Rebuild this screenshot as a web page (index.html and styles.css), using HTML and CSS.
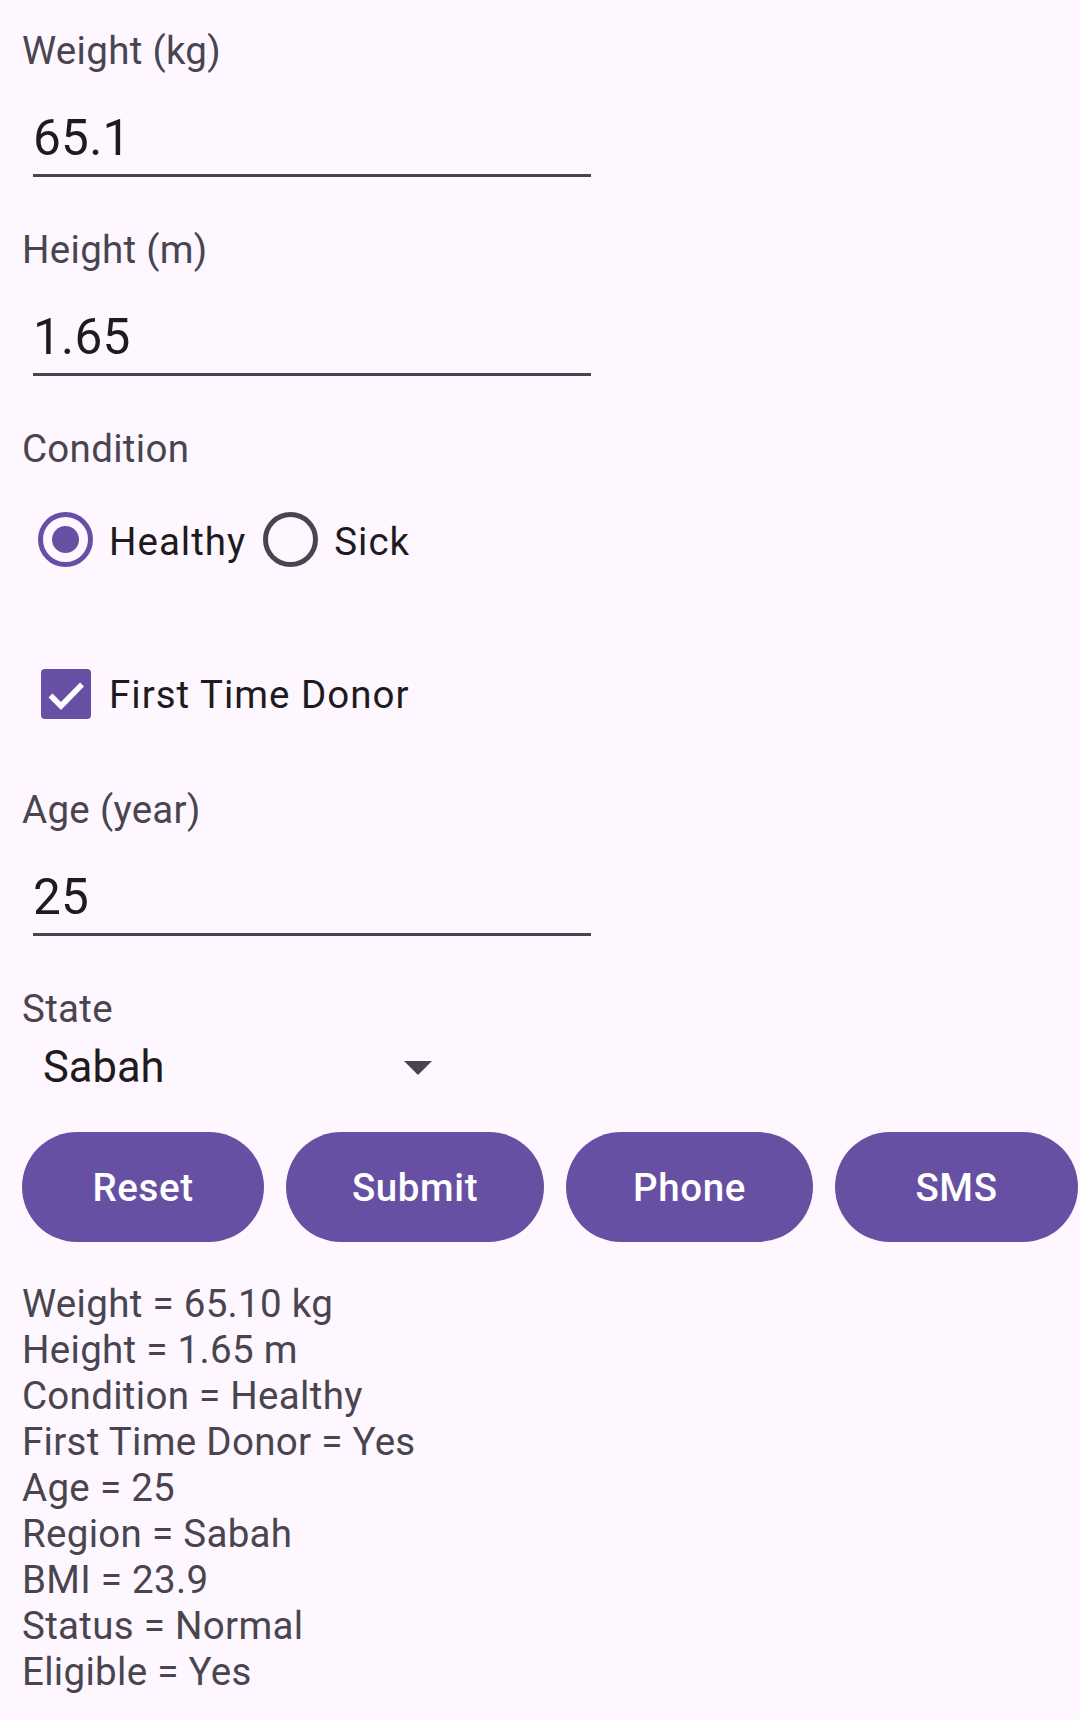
FILE: index.html
```html
<!DOCTYPE html>
<html lang="en">
<head>
<meta charset="utf-8">
<title>Blood Donor</title>
<link rel="stylesheet" href="styles.css">
</head>
<body>
<main class="form">
  <div class="label first">Weight (kg)</div>
  <div class="field">65.1</div>

  <div class="label">Height (m)</div>
  <div class="field">1.65</div>

  <div class="label">Condition</div>
  <div class="radio-group">
    <div class="radio checked"><span class="ring"><span class="dot"></span></span><span class="opt-text">Healthy</span></div>
    <div class="radio"><span class="ring"></span><span class="opt-text">Sick</span></div>
  </div>

  <div class="check-row">
    <span class="box">
      <svg viewBox="0 0 50 50" width="50" height="50"><path d="M9.5 26.5 L20 37 L41 15.5" fill="none" stroke="#ffffff" stroke-width="5.5"/></svg>
    </span>
    <span class="check-text">First Time Donor</span>
  </div>

  <div class="label age">Age (year)</div>
  <div class="field">25</div>

  <div class="label">State</div>
  <div class="spinner">
    <span class="spinner-text">Sabah</span>
    <svg class="caret" viewBox="0 0 28 14" width="28" height="14"><polygon points="0,0 28,0 14,14" fill="#49454F"/></svg>
  </div>

  <div class="buttons">
    <button class="btn">Reset</button>
    <button class="btn">Submit</button>
    <button class="btn">Phone</button>
    <button class="btn">SMS</button>
  </div>

  <div class="results">
    <div>Weight = 65.10 kg</div>
    <div>Height = 1.65 m</div>
    <div>Condition = Healthy</div>
    <div>First Time Donor = Yes</div>
    <div>Age = 25</div>
    <div>Region = Sabah</div>
    <div>BMI = 23.9</div>
    <div>Status = Normal</div>
    <div>Eligible = Yes</div>
  </div>
</main>
</body>
</html>
```
FILE: styles.css
```css
html, body {
  margin: 0;
  padding: 0;
  background: #FEF7FF;
}
body {
  font-family: Roboto, "Noto Sans", sans-serif;
  color: #49454F;
  width: 1080px;
  height: 1720px;
  overflow: hidden;
}
.form {
  padding: 0 0 0 22px;
  display: flex;
  flex-direction: column;
  align-items: flex-start;
}
.label {
  font-size: 38.5px;
  line-height: 46px;
  letter-spacing: 0.3px;
  color: #49454F;
  margin-top: 50px;
}
.label.first {
  margin-top: 28px;
}
.label.age {
  margin-top: 68px;
}
.field {
  margin-top: 35px;
  margin-left: 11px;
  width: 558px;
  box-sizing: border-box;
  font-size: 49.5px;
  line-height: 58px;
  letter-spacing: 0.3px;
  height: 68px;
  padding-bottom: 7px;
  color: #1D1B20;
  border-bottom: 3px solid #49454F;
}
.radio-group {
  display: flex;
  align-items: center;
  margin-top: 40px;
  margin-left: 16px;
}
.radio {
  display: flex;
  align-items: center;
}
.radio + .radio {
  margin-left: 17px;
}
.ring {
  width: 55px;
  height: 55px;
  box-sizing: border-box;
  border: 5.5px solid #49454F;
  border-radius: 50%;
  display: flex;
  align-items: center;
  justify-content: center;
}
.radio.checked .ring {
  border-color: #6750A4;
}
.dot {
  width: 27.5px;
  height: 27.5px;
  border-radius: 50%;
  background: #6750A4;
}
.opt-text, .check-text {
  font-size: 38.5px;
  line-height: 46px;
  letter-spacing: 1px;
  color: #1D1B20;
  margin-left: 16px;
  padding-top: 5px;
}
.check-row {
  display: flex;
  align-items: center;
  margin-top: 102px;
  margin-left: 19px;
}
.box {
  width: 50px;
  height: 50px;
  border-radius: 4px;
  background: #6750A4;
  display: block;
}
.box svg {
  display: block;
}
.check-text {
  margin-left: 18px;
  padding-top: 1px;
}
.spinner {
  display: flex;
  align-items: center;
  margin-top: 10px;
  width: 410px;
  box-sizing: border-box;
  padding-left: 21px;
}
.spinner-text {
  font-size: 43.5px;
  line-height: 52px;
  color: #1D1B20;
}
.caret {
  margin-left: auto;
  display: block;
}
.buttons {
  display: grid;
  grid-template-columns: 242px 258px 247px 243px;
  column-gap: 22px;
  margin-top: 38px;
}
.btn {
  height: 110px;
  border: none;
  border-radius: 55px;
  background: #6750A4;
  color: #FFFFFF;
  font-family: Roboto, "Noto Sans", sans-serif;
  font-weight: 500;
  font-size: 38.5px;
  letter-spacing: 0.6px;
  padding: 0;
  margin: 0;
}
.results {
  margin-top: 39px;
  font-size: 38.5px;
  line-height: 46px;
  letter-spacing: 0.3px;
  color: #49454F;
}
```
